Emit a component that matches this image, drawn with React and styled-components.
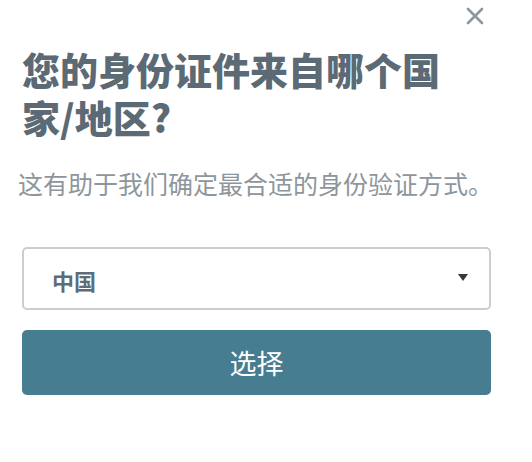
import React from "react";
import styled, { createGlobalStyle } from "styled-components";

const Global = createGlobalStyle`
  html, body { margin: 0; padding: 0; background: #ffffff; }
  body { font-family: "Noto Sans CJK SC", "Noto Sans", sans-serif; }
`;

const Dialog = styled.div`
  width: 532px;
  height: 462px;
  box-sizing: border-box;
  padding: 0 41px 0 22px;
  display: flex;
  flex-direction: column;
  background: #fff;
`;

const TopBar = styled.div`
  height: 45px;
  display: flex;
  justify-content: flex-end;
  align-items: flex-start;
  padding-top: 7px;
  padding-right: 6px;
  box-sizing: border-box;
`;

const CloseButton = styled.button`
  width: 20px;
  height: 18px;
  padding: 0;
  border: none;
  background: transparent;
  display: flex;
  align-items: center;
  justify-content: center;
  cursor: pointer;
`;

const Title = styled.h1`
  margin: 0;
  font-size: 38px;
  line-height: 48px;
  font-weight: 900;
  color: #5b6a74;
`;

const Subtitle = styled.p`
  margin: 24px 0 0 -4px;
  font-size: 25px;
  line-height: 36px;
  color: #8d969c;
  white-space: nowrap;
`;

const Select = styled.div`
  margin-top: 46px;
  height: 63px;
  box-sizing: border-box;
  border: 2px solid #cbced1;
  border-radius: 5px;
  display: flex;
  align-items: center;
  justify-content: space-between;
  padding: 0 21px 0 28px;
`;

const SelectValue = styled.span`
  font-size: 22px;
  font-weight: 700;
  color: #5f6c75;
  padding-top: 2px;
`;

const Caret = styled.span`
  width: 0;
  height: 0;
  border-left: 5px solid transparent;
  border-right: 5px solid transparent;
  border-top: 7px solid #34393d;
  margin-top: -2px;
`;

const PrimaryButton = styled.button`
  margin-top: 20px;
  height: 65px;
  border: none;
  border-radius: 5px;
  background: #467d91;
  color: #ffffff;
  font-family: "Noto Sans CJK SC", "Noto Sans", sans-serif;
  font-size: 27px;
  font-weight: 400;
  cursor: pointer;
`;

export default function App() {
  return (
    <>
      <Global />
      <Dialog>
        <TopBar>
          <CloseButton aria-label="关闭">
            <svg width="18" height="18" viewBox="0 0 18 18">
              <path d="M2 2 L16 16 M16 2 L2 16" stroke="#8e959b" strokeWidth="2.6" strokeLinecap="round" />
            </svg>
          </CloseButton>
        </TopBar>
        <Title>
          您的身份证件来自哪个国
          <br />
          家/地区?
        </Title>
        <Subtitle>这有助于我们确定最合适的身份验证方式。</Subtitle>
        <Select>
          <SelectValue>中国</SelectValue>
          <Caret />
        </Select>
        <PrimaryButton>选择</PrimaryButton>
      </Dialog>
    </>
  );
}
